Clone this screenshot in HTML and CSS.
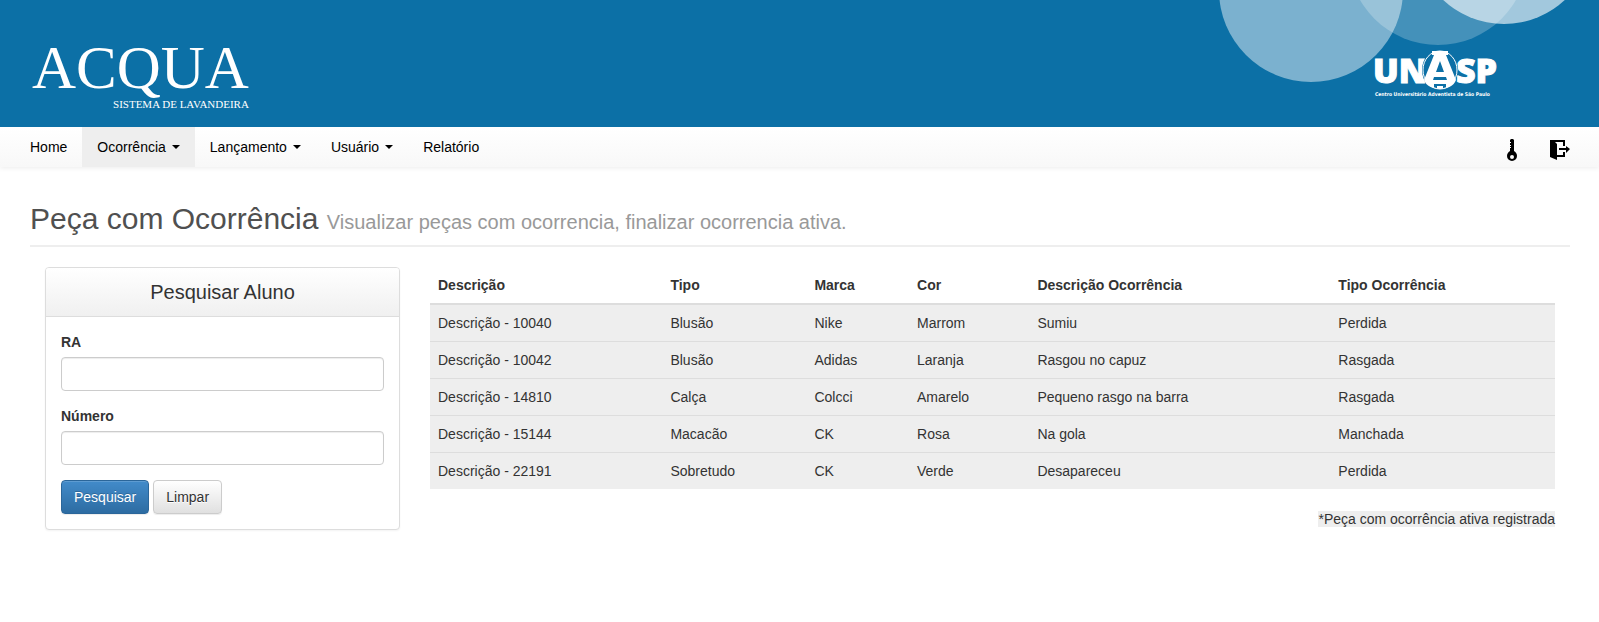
FILE: index.html
```html
<!DOCTYPE html>
<html lang="pt-BR">
<head>
<meta charset="utf-8">
<title>Acqua - Sistema de Lavanderia</title>
<link rel="stylesheet" href="styles.css">
</head>
<body>
<header class="banner">
  <svg class="bubbles" width="399" height="127" viewBox="0 0 399 127" aria-hidden="true">
    <circle cx="238" cy="-45" r="90" fill="#fff" fill-opacity=".23"/>
    <circle cx="111" cy="-10" r="92" fill="#fff" fill-opacity=".46"/>
    <circle cx="304" cy="-65" r="89" fill="#fff" fill-opacity=".62"/>
  </svg>
  <a class="brand" href="#">
    <span class="brand-name">ACQUA</span>
    <span class="brand-tag">SISTEMA DE LAVANDEIRA</span>
  </a>
  <svg class="unasp" width="126" height="50" viewBox="0 0 126 50" role="img" aria-label="UNASP">
    <g class="unasp-letters">
      <text x="0" y="35">UN</text>
      <text x="83" y="35">SP</text>
    </g>
    <ellipse cx="67" cy="22" rx="18" ry="21" fill="#0c70a6"/>
    <ellipse cx="67" cy="22" rx="17" ry="19" fill="none" stroke="#fff" stroke-width="1"/>
    <path d="M59 3h16v4h-2l10 25c-4 12-28 12-32 0l10-25h-2zM67 13l-4 11h8zM61 29l-1 3h14l-1-3zM61 36v4h3v-2h6v2h3v-4z" fill="#fff" fill-rule="evenodd"/>
    <text class="unasp-caption" x="2" y="48">Centro Universitário Adventista de São Paulo</text>
  </svg>
</header>
<nav class="navbar">
  <ul class="menu">
    <li><a href="#">Home</a></li>
    <li class="active"><a href="#">Ocorrência<span class="caret"></span></a></li>
    <li><a href="#">Lançamento<span class="caret"></span></a></li>
    <li><a href="#">Usuário<span class="caret"></span></a></li>
    <li><a href="#">Relatório</a></li>
  </ul>
  <div class="tools">
    <a href="#" aria-label="Alterar senha"><svg width="10" height="22" viewBox="0 0 10 22"><path fill-rule="evenodd" d="M4 0h2l1 1v11c2 1 3 3 3 5a5 5 0 0 1-10 0c0-2 1-4 3-5V9h1V8H3V7h1V6H3V4h1V3H3V1zM5 16a2 2 0 1 0 0 4 2 2 0 0 0 0-4z"/></svg></a>
    <a href="#" aria-label="Sair"><svg width="20" height="20" viewBox="0 0 20 20"><path d="M0 0h15v6h-2V2H5l2 2v11h6v-3h2v5H7v3l-7-3zM9 8h7V6l4 3-4 4v-3H9z"/></svg></a>
  </div>
</nav>
<main class="page">
  <h1 class="page-header">Peça com Ocorrência <small>Visualizar peças com ocorrencia, finalizar ocorrencia ativa.</small></h1>
  <div class="row">
    <section class="search">
      <form class="panel">
        <h2 class="panel-title">Pesquisar Aluno</h2>
        <div class="panel-body">
          <div class="field"><label for="ra">RA</label><input id="ra" type="text"></div>
          <div class="field"><label for="numero">Número</label><input id="numero" type="text"></div>
          <div class="actions">
            <button class="btn btn-primary" type="submit">Pesquisar</button>
            <button class="btn" type="reset">Limpar</button>
          </div>
        </div>
      </form>
    </section>
    <section class="results">
      <table>
        <colgroup>
          <col class="col-desc"><col class="col-tipo"><col class="col-marca"><col class="col-cor"><col class="col-ocorrencia"><col>
        </colgroup>
        <thead>
          <tr><th>Descrição</th><th>Tipo</th><th>Marca</th><th>Cor</th><th>Descrição Ocorrência</th><th>Tipo Ocorrência</th></tr>
        </thead>
        <tbody>
          <tr><td>Descrição - 10040</td><td>Blusão</td><td>Nike</td><td>Marrom</td><td>Sumiu</td><td>Perdida</td></tr>
          <tr><td>Descrição - 10042</td><td>Blusão</td><td>Adidas</td><td>Laranja</td><td>Rasgou no capuz</td><td>Rasgada</td></tr>
          <tr><td>Descrição - 14810</td><td>Calça</td><td>Colcci</td><td>Amarelo</td><td>Pequeno rasgo na barra</td><td>Rasgada</td></tr>
          <tr><td>Descrição - 15144</td><td>Macacão</td><td>CK</td><td>Rosa</td><td>Na gola</td><td>Manchada</td></tr>
          <tr><td>Descrição - 22191</td><td>Sobretudo</td><td>CK</td><td>Verde</td><td>Desapareceu</td><td>Perdida</td></tr>
        </tbody>
      </table>
      <p class="legend"><span>*Peça com ocorrência ativa registrada</span></p>
    </section>
  </div>
</main>
</body>
</html>
```
FILE: styles.css
```css
* { box-sizing: border-box; }

body {
  margin: 0;
  background: #fff;
  color: #333;
  font: 14px/20px "Liberation Sans", Arial, sans-serif;
}

.banner {
  position: relative;
  display: flex;
  justify-content: space-between;
  align-items: flex-start;
  height: 127px;
  padding: 38px 100px 0 32px;
  background: #0c70a6;
  overflow: hidden;
}
.bubbles { position: absolute; top: 0; right: 0; }
.brand {
  display: flex;
  flex-direction: column;
  align-items: flex-end;
  color: #fff;
  font-family: "Liberation Serif", "Times New Roman", serif;
  text-decoration: none;
}
.brand-name { font-size: 61px; line-height: 60px; }
.brand-tag { font-size: 11px; line-height: 12px; }
.unasp { position: relative; margin-top: 10px; fill: #fff; overflow: visible; }
.unasp-letters {
  font: 800 34px "Open Sans", sans-serif;
  stroke: #fff;
  stroke-width: 1px;
}
.unasp-caption { font: bold 5px "DejaVu Sans Condensed", "DejaVu Sans", sans-serif; }

.navbar {
  display: flex;
  justify-content: space-between;
  height: 40px;
  padding: 0 15px;
  background: linear-gradient(#fff, #f8f8f8);
  box-shadow: 0 1px 5px rgba(0, 0, 0, .08);
}
.menu { display: flex; margin: 0; padding: 0; list-style: none; }
.menu a {
  display: flex;
  align-items: center;
  gap: 6px;
  padding: 10px 15px;
  color: #000;
  text-decoration: none;
}
.menu .active a { background: #eee; }
.caret {
  border-top: 4px solid #000;
  border-left: 4px solid transparent;
  border-right: 4px solid transparent;
}
.tools { display: flex; align-items: center; gap: 33px; padding: 5px 14px 0 0; }
.tools a { display: flex; color: #000; }

.page { padding: 33px 29px 30px 30px; }
.page-header {
  margin: 0 0 20px;
  padding-bottom: 7px;
  border-bottom: 2px solid #eee;
  color: #505050;
  font-size: 30px;
  font-weight: normal;
  line-height: 38px;
}
.page-header small { color: #999; font-size: 20px; line-height: 20px; }

.row { display: flex; }
.search { flex: 0 0 25%; padding: 0 15px; }
.results { flex: 1; padding: 0 15px; }

.panel {
  border: 1px solid #ddd;
  border-radius: 4px;
  background: #fff;
  box-shadow: 0 1px 2px rgba(0, 0, 0, .05);
}
.panel-title {
  margin: 0;
  padding: 10px 15px;
  border-bottom: 1px solid #ddd;
  border-radius: 3px 3px 0 0;
  background: linear-gradient(#fff, #f0f0f0);
  font-size: 20px;
  font-weight: normal;
  line-height: 28px;
  text-align: center;
}
.panel-body { padding: 15px; }
.field { margin-bottom: 15px; }
.field label { display: block; margin-bottom: 5px; font-weight: bold; }
.field input {
  display: block;
  width: 100%;
  height: 34px;
  padding: 6px 12px;
  border: 1px solid #ccc;
  border-radius: 4px;
  box-shadow: inset 0 1px 1px rgba(0, 0, 0, .075);
  font: inherit;
}
.actions { display: flex; gap: 4px; }
.btn {
  padding: 6px 12px;
  border: 1px solid #ccc;
  border-radius: 4px;
  background: linear-gradient(#fff, #e0e0e0);
  box-shadow: inset 0 1px 0 rgba(255, 255, 255, .15), 0 1px 1px rgba(0, 0, 0, .075);
  color: #333;
  font: inherit;
  text-shadow: 0 1px 0 #fff;
}
.btn-primary {
  border-color: #2b669a;
  background: linear-gradient(#428bca, #2d6ca2);
  color: #fff;
  text-shadow: 0 -1px 0 rgba(0, 0, 0, .2);
}

table { width: 100%; border-collapse: collapse; table-layout: fixed; }
.col-desc { width: 20.66%; }
.col-tipo { width: 12.8%; }
.col-marca { width: 9.12%; }
.col-cor { width: 10.7%; }
.col-ocorrencia { width: 26.75%; }
th, td { padding: 8px; text-align: left; }
th { border-bottom: 2px solid #ddd; }
td { border-top: 1px solid #ddd; background: #eee; }
.legend { margin: 20px 0 0; text-align: right; }
.legend span { background: #eee; }
```
